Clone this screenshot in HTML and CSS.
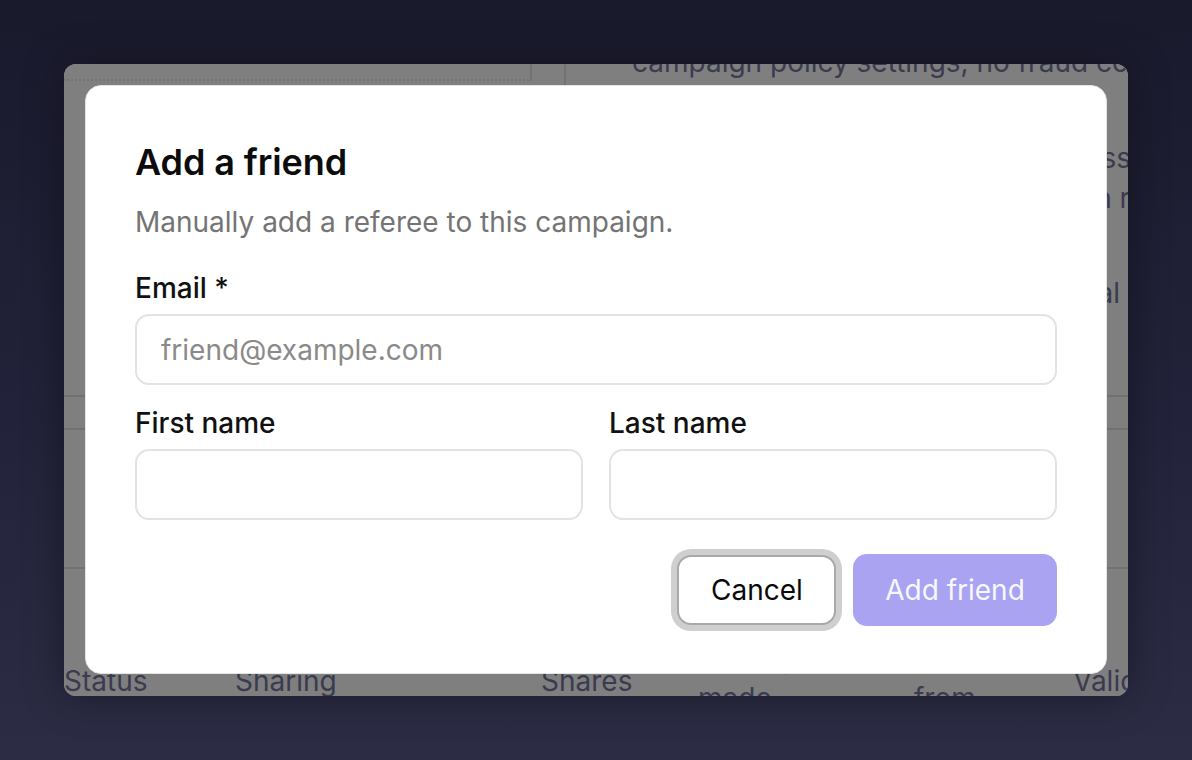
FILE: index.html
```html
<!DOCTYPE html>
<html lang="en">
<head>
<meta charset="utf-8">
<title>Add a friend</title>
<link rel="stylesheet" href="styles.css">
</head>
<body>
<div class="window">
  <div class="page">
    <div class="page-top">
      <div class="col-left"></div>
      <div class="col-mid"></div>
      <div class="col-right">
        <p class="bg-line first">campaign policy settings, no fraud controls and no reward caps apply</p>
        <p class="bg-line end l2">are added to the process</p>
        <p class="bg-line end l3">after a referral was made in re</p>
        <p class="bg-line end l4">counted the same as normal</p>
      </div>
    </div>
    <div class="rule r1"></div>
    <div class="rule r2"></div>
    <div class="rule r3"></div>
    <div class="thead">
      <span class="th w1">Status</span>
      <span class="th w2">Sharing</span>
      <span class="th w3">Shares</span>
      <span class="th w4">Referrals made</span>
      <span class="th w5">Referred from</span>
      <span class="th w6">Valid</span>
    </div>
  </div>
  <div class="overlay">
    <div class="modal">
      <h1 class="title">Add a friend</h1>
      <p class="subtitle">Manually add a referee to this campaign.</p>
      <label class="label">Email *</label>
      <input class="field" type="text" placeholder="friend@example.com">
      <div class="name-row">
        <div class="name-col">
          <label class="label">First name</label>
          <input class="field" type="text">
        </div>
        <div class="name-col">
          <label class="label">Last name</label>
          <input class="field" type="text">
        </div>
      </div>
      <div class="actions">
        <button class="btn btn-cancel" type="button">Cancel</button>
        <button class="btn btn-primary" type="button">Add friend</button>
      </div>
    </div>
  </div>
</div>
</body>
</html>
```
FILE: styles.css
```css
* { box-sizing: border-box; }
html, body { margin: 0; padding: 0; }
body {
  width: 1192px;
  height: 760px;
  padding: 64px;
  background: linear-gradient(180deg, #1a1a2d 0%, #22223a 55%, #2c2c44 100%);
  font-family: Inter, "Noto Sans", "Liberation Sans", sans-serif;
  overflow: hidden;
}
.window {
  position: relative;
  width: 1064px;
  height: 632px;
  border-radius: 12px;
  overflow: hidden;
  background: #ffffff;
  box-shadow: 0 0 40px rgba(0, 0, 0, 0.35);
}
.page {
  height: 100%;
  display: flex;
  flex-direction: column;
  color: #76769e;
  font-size: 28px;
}
.page-top {
  display: grid;
  grid-template-columns: 468px 34px 1fr;
  height: 357px;
  flex: none;
  margin-top: -26px;
}
.col-left { border-bottom: 2px dotted #e8e8e8; height: 43px; border-right: 2px solid #e4e4e4; }
.col-mid { border-right: 2px solid #e4e4e4; height: 47px; }
.col-right { padding-left: 66px; min-width: 0; }
.bg-line { margin: 0; white-space: nowrap; line-height: 40px; }
.bg-line.end { text-align: right; }
.bg-line.first { margin-top: 4px; }
.bg-line.l2 { margin-top: 56px; margin-right: -3px; }
.bg-line.l3 { margin-top: 0; margin-right: -18px; }
.bg-line.l4 { margin-top: 55px; margin-right: 8px; }
.rule { height: 2px; flex: none; background: #e2e2e2; }
.r2 { margin-top: 31px; }
.r3 { margin-top: 137px; }
.thead {
  display: flex;
  flex: none;
  align-items: center;
  height: 70px;
  margin-top: 77px;
  line-height: 34px;
}
.th { display: block; flex: none; }
.w1 { width: 171px; }
.w2 { width: 306px; }
.w3 { width: 157px; }
.w4 { width: 150px; margin-right: 66px; }
.w5 { width: 150px; margin-right: 9px; }
.w6 { width: 60px; }
.overlay {
  position: absolute;
  inset: 0;
  background: rgba(0, 0, 0, 0.5);
  display: flex;
  align-items: center;
  justify-content: center;
}
.modal {
  width: 1022px;
  height: 589px;
  margin-top: -1px;
  background: #ffffff;
  border: 1px solid #e4e4e4;
  border-radius: 16px;
  padding: 49px 49px 47px;
  display: flex;
  flex-direction: column;
}
.title {
  margin: 0;
  font-size: 36px;
  font-weight: 600;
  line-height: 54px;
  color: #0c0c0c;
  letter-spacing: -0.1px;
}
.subtitle {
  margin: 13px 0 0;
  font-size: 28px;
  line-height: 40px;
  color: #747474;
}
.label {
  display: block;
  margin-top: 26px;
  font-size: 28px;
  font-weight: 500;
  line-height: 40px;
  color: #111111;
}
.field {
  display: block;
  width: 100%;
  height: 71px;
  margin-top: 6px;
  border: 2px solid #e3e3e3;
  border-radius: 14px;
  padding: 0 24px;
  font-family: inherit;
  font-size: 28px;
  color: #111;
  background: #ffffff;
  outline: none;
}
.field::placeholder { color: #8a8a8a; }
.name-row {
  display: grid;
  grid-template-columns: 1fr 1fr;
  column-gap: 26px;
}
.name-row .label { margin-top: 18px; }
.actions {
  margin-top: auto;
  display: flex;
  justify-content: flex-end;
  align-items: center;
  gap: 17px;
}
.btn {
  height: 72px;
  border-radius: 14px;
  font-family: inherit;
  font-size: 28px;
  font-weight: 400;
  padding: 0 32px;
  cursor: pointer;
}
.btn-cancel {
  width: 159px;
  height: 70px;
  background: #ffffff;
  border: 2px solid #a9a9a9;
  color: #0a0a0a;
  box-shadow: 0 0 0 6px #cfcfcf;
}
.btn-primary {
  width: 204px;
  background: #a9a3f1;
  border: none;
  color: #f7f7ff;
}
```
